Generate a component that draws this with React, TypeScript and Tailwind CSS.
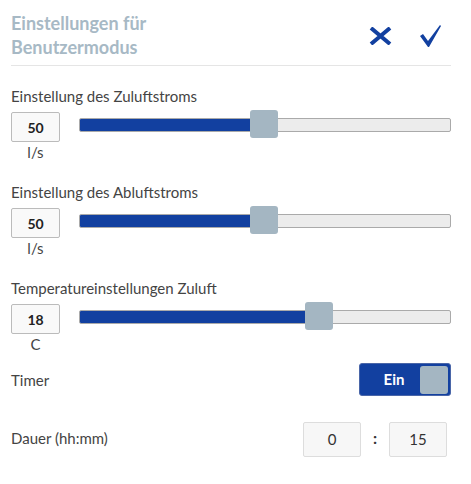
import React from "react";

const BLUE = "#1240a0";

function Slider({ frac }: { frac: number }) {
  return (
    <div className="relative flex-1 h-[28px] mt-[-2px]">
      <div className="absolute left-0 right-0 top-[8px] h-[14px] rounded-[2px] border border-[#aaaaaa] bg-[#ececec] overflow-hidden">
        <div
          className="h-full bg-[#1240a0]"
          style={{ width: `calc((100% - 28px) * ${frac} + 4px)` }}
        />
      </div>
      <div
        className="absolute top-0 w-[28px] h-[28px] rounded-[3px] bg-[#a4b6c2]"
        style={{ left: `calc((100% - 28px) * ${frac})` }}
      />
    </div>
  );
}

function SliderSetting({ label, value, unit, frac }: { label: string; value: string; unit: string; frac: number }) {
  return (
    <div>
      <div className="text-[15px] leading-[20px] text-[#444444]">{label}</div>
      <div className="flex items-start gap-[19px] mt-[6px]">
        <div className="flex flex-col items-center w-[49px] shrink-0">
          <div className="w-[49px] h-[30px] border border-[#bbbbbb] rounded-[2px] bg-[#f9f9f9] flex items-center justify-center text-[14px] font-bold text-[#222222]">
            {value}
          </div>
          <div className="text-[15px] leading-[20px] text-[#444444]">{unit}</div>
        </div>
        <Slider frac={frac} />
      </div>
    </div>
  );
}

export default function App() {
  return (
    <div
      className="w-[471px] h-[484px] bg-white pl-[11px] pr-[20px] pt-[11px]"
      style={{ fontFamily: "Lato, 'Liberation Sans', sans-serif" }}
    >
      <div className="flex items-start justify-between border-b border-[#e5e5e5] h-[55px]">
        <h1 className="text-[18px] leading-[24px] font-bold text-[#a7b9c5]">
          Einstellungen für
          <br />
          Benutzermodus
        </h1>
        <div className="flex items-center gap-[28px] mt-[14px] mr-[10px]">
          <svg width="23" height="18" viewBox="0 0 23 18">
            <path d="M2 1 L21 17 M21 1 L2 17" stroke={BLUE} strokeWidth="4" />
          </svg>
          <svg width="21" height="22" viewBox="0 0 21 22">
            <polygon points="0,11 3,9 8,16 20,0 21,1 9,22 8,22" fill={BLUE} />
          </svg>
        </div>
      </div>

      <div className="mt-[20px]">
        <SliderSetting label="Einstellung des Zuluftstroms" value="50" unit="l/s" frac={0.497} />
      </div>
      <div className="mt-[20px]">
        <SliderSetting label="Einstellung des Abluftstroms" value="50" unit="l/s" frac={0.497} />
      </div>
      <div className="mt-[20px]">
        <SliderSetting label="Temperatureinstellungen Zuluft" value="18" unit="C" frac={0.657} />
      </div>

      <div className="flex items-center justify-between mt-[9px]">
        <div className="text-[15px] leading-[20px] text-[#444444]">Timer</div>
        <div className="w-[92px] h-[33px] rounded-[3px] bg-[#1240a0] border border-[#4a66a8] flex items-center pl-[2px] pr-[2px]">
          <div className="flex-1 text-center pl-[6px] text-white font-bold text-[15px]">Ein</div>
          <div className="w-[28px] h-[28px] rounded-[3px] bg-[#a4b6c2]" />
        </div>
      </div>

      <div className="flex items-center justify-between mt-[26px]">
        <div className="text-[15px] leading-[20px] text-[#444444] mt-[-4px]">Dauer (hh:mm)</div>
        <div className="flex items-center mr-[4px]">
          <div className="w-[58px] h-[35px] border border-[#dddddd] rounded-[2px] bg-[#f7f7f7] flex items-center justify-center text-[15px] text-[#333333]">
            0
          </div>
          <div className="w-[28px] text-center font-bold text-[16px] text-[#333333] mt-[-3px]">:</div>
          <div className="w-[58px] h-[35px] border border-[#dddddd] rounded-[2px] bg-[#f7f7f7] flex items-center justify-center text-[15px] text-[#333333]">
            15
          </div>
        </div>
      </div>
    </div>
  );
}
